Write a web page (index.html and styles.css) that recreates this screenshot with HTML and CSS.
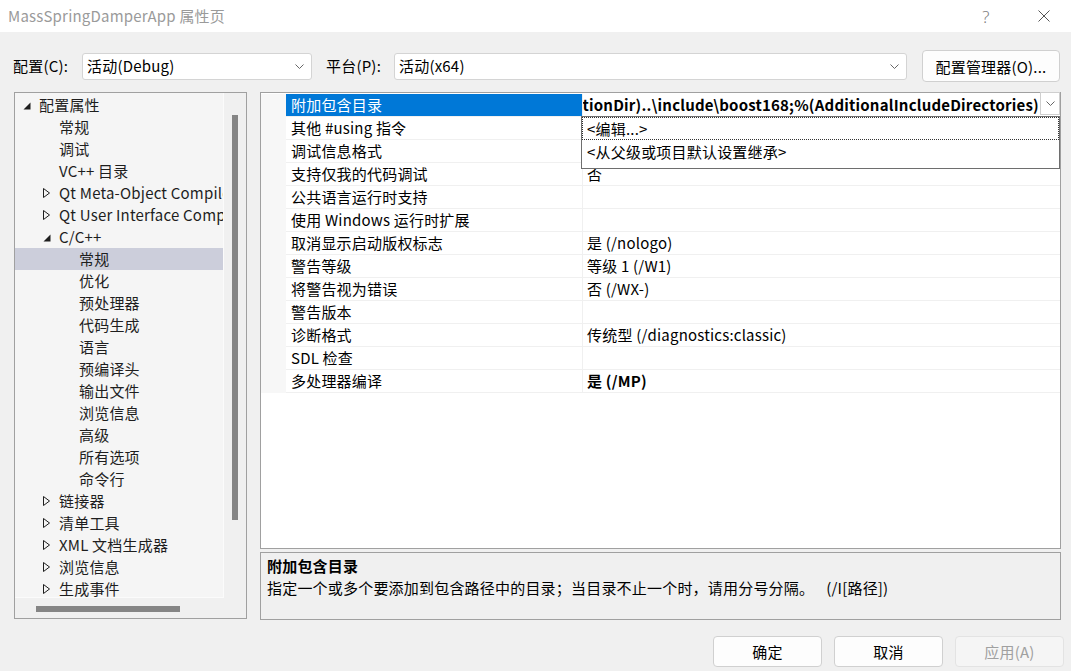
FILE: index.html
```html
<!DOCTYPE html>
<html lang="zh-CN">
<head>
<meta charset="utf-8">
<title>MassSpringDamperApp 属性页</title>
<link rel="stylesheet" href="styles.css">
</head>
<body>
<div class="window">
  <div class="titlebar">
    <div class="title">MassSpringDamperApp 属性页</div>
    <div class="tb-btn help">?</div>
    <div class="tb-btn close">
      <svg width="12" height="12" viewBox="0 0 12 12"><path d="M0.5 0.5 L11.5 11.5 M11.5 0.5 L0.5 11.5" stroke="#555" stroke-width="1" fill="none"/></svg>
    </div>
  </div>

  <div class="config-row">
    <span class="lbl lbl-config">配置(C):</span>
    <div class="combo combo-config">
      <span class="combo-text">活动(Debug)</span>
      <svg class="chev" width="9" height="5" viewBox="0 0 9 5"><path d="M0.5 0.5 L4.5 4.5 L8.5 0.5" stroke="#666" fill="none"/></svg>
    </div>
    <span class="lbl lbl-platform">平台(P):</span>
    <div class="combo combo-platform">
      <span class="combo-text">活动(x64)</span>
      <svg class="chev" width="9" height="5" viewBox="0 0 9 5"><path d="M0.5 0.5 L4.5 4.5 L8.5 0.5" stroke="#666" fill="none"/></svg>
    </div>
    <div class="btn btn-mgr">配置管理器(O)...</div>
  </div>

  <div class="main">
    <div class="tree">
      <div class="tree-content">
        <div class="trow l0"><span class="arrow"><svg class="tri-open" width="8" height="8" viewBox="0 0 8 8"><path d="M7.5 0.5 L7.5 7.5 L0.5 7.5 Z" fill="#1e1e1e"/></svg></span><span class="tlabel">配置属性</span></div>
        <div class="trow l1"><span class="arrow"></span><span class="tlabel">常规</span></div>
        <div class="trow l1"><span class="arrow"></span><span class="tlabel">调试</span></div>
        <div class="trow l1"><span class="arrow"></span><span class="tlabel">VC++ 目录</span></div>
        <div class="trow l1"><span class="arrow"><svg width="7" height="10" viewBox="0 0 7 10"><path d="M0.5 0.5 L6.5 5 L0.5 9.5 Z" fill="none" stroke="#1e1e1e"/></svg></span><span class="tlabel">Qt Meta-Object Compiler</span></div>
        <div class="trow l1"><span class="arrow"><svg width="7" height="10" viewBox="0 0 7 10"><path d="M0.5 0.5 L6.5 5 L0.5 9.5 Z" fill="none" stroke="#1e1e1e"/></svg></span><span class="tlabel">Qt User Interface Compiler</span></div>
        <div class="trow l1"><span class="arrow"><svg class="tri-open" width="8" height="8" viewBox="0 0 8 8"><path d="M7.5 0.5 L7.5 7.5 L0.5 7.5 Z" fill="#1e1e1e"/></svg></span><span class="tlabel">C/C++</span></div>
        <div class="trow l2 selected"><span class="arrow"></span><span class="tlabel">常规</span></div>
        <div class="trow l2"><span class="arrow"></span><span class="tlabel">优化</span></div>
        <div class="trow l2"><span class="arrow"></span><span class="tlabel">预处理器</span></div>
        <div class="trow l2"><span class="arrow"></span><span class="tlabel">代码生成</span></div>
        <div class="trow l2"><span class="arrow"></span><span class="tlabel">语言</span></div>
        <div class="trow l2"><span class="arrow"></span><span class="tlabel">预编译头</span></div>
        <div class="trow l2"><span class="arrow"></span><span class="tlabel">输出文件</span></div>
        <div class="trow l2"><span class="arrow"></span><span class="tlabel">浏览信息</span></div>
        <div class="trow l2"><span class="arrow"></span><span class="tlabel">高级</span></div>
        <div class="trow l2"><span class="arrow"></span><span class="tlabel">所有选项</span></div>
        <div class="trow l2"><span class="arrow"></span><span class="tlabel">命令行</span></div>
        <div class="trow l1"><span class="arrow"><svg width="7" height="10" viewBox="0 0 7 10"><path d="M0.5 0.5 L6.5 5 L0.5 9.5 Z" fill="none" stroke="#1e1e1e"/></svg></span><span class="tlabel">链接器</span></div>
        <div class="trow l1"><span class="arrow"><svg width="7" height="10" viewBox="0 0 7 10"><path d="M0.5 0.5 L6.5 5 L0.5 9.5 Z" fill="none" stroke="#1e1e1e"/></svg></span><span class="tlabel">清单工具</span></div>
        <div class="trow l1"><span class="arrow"><svg width="7" height="10" viewBox="0 0 7 10"><path d="M0.5 0.5 L6.5 5 L0.5 9.5 Z" fill="none" stroke="#1e1e1e"/></svg></span><span class="tlabel">XML 文档生成器</span></div>
        <div class="trow l1"><span class="arrow"><svg width="7" height="10" viewBox="0 0 7 10"><path d="M0.5 0.5 L6.5 5 L0.5 9.5 Z" fill="none" stroke="#1e1e1e"/></svg></span><span class="tlabel">浏览信息</span></div>
        <div class="trow l1"><span class="arrow"><svg width="7" height="10" viewBox="0 0 7 10"><path d="M0.5 0.5 L6.5 5 L0.5 9.5 Z" fill="none" stroke="#1e1e1e"/></svg></span><span class="tlabel">生成事件</span></div>
      </div>
      <div class="vscroll"><div class="vthumb"></div></div>
      <div class="hscroll"><div class="hthumb"></div></div>
      <div class="corner"></div>
    </div>

    <div class="right">
      <div class="grid">
        <div class="prow selected">
          <div class="gutter"></div>
          <div class="pname">附加包含目录</div>
          <div class="pval edit">
            <div class="edit-clip"><span class="edit-text">$(SolutionDir)..\include\boost168;%(AdditionalIncludeDirectories)</span></div>
            <div class="dd-btn"><svg width="9" height="5" viewBox="0 0 9 5"><path d="M0.5 0.5 L4.5 4.5 L8.5 0.5" stroke="#666" fill="none"/></svg></div>
          </div>
        </div>
        <div class="prow"><div class="gutter"></div><div class="pname">其他 #using 指令</div><div class="pval"></div></div>
        <div class="prow"><div class="gutter"></div><div class="pname">调试信息格式</div><div class="pval"></div></div>
        <div class="prow"><div class="gutter"></div><div class="pname">支持仅我的代码调试</div><div class="pval">否</div></div>
        <div class="prow"><div class="gutter"></div><div class="pname">公共语言运行时支持</div><div class="pval"></div></div>
        <div class="prow"><div class="gutter"></div><div class="pname">使用 Windows 运行时扩展</div><div class="pval"></div></div>
        <div class="prow"><div class="gutter"></div><div class="pname">取消显示启动版权标志</div><div class="pval">是 (/nologo)</div></div>
        <div class="prow"><div class="gutter"></div><div class="pname">警告等级</div><div class="pval">等级 1 (/W1)</div></div>
        <div class="prow"><div class="gutter"></div><div class="pname">将警告视为错误</div><div class="pval">否 (/WX-)</div></div>
        <div class="prow"><div class="gutter"></div><div class="pname">警告版本</div><div class="pval"></div></div>
        <div class="prow"><div class="gutter"></div><div class="pname">诊断格式</div><div class="pval">传统型 (/diagnostics:classic)</div></div>
        <div class="prow"><div class="gutter"></div><div class="pname">SDL 检查</div><div class="pval"></div></div>
        <div class="prow"><div class="gutter"></div><div class="pname">多处理器编译</div><div class="pval bold">是 (/MP)</div></div>

        <div class="popup">
          <div class="popup-item focus">&lt;编辑...&gt;</div>
          <div class="popup-item">&lt;从父级或项目默认设置继承&gt;</div>
        </div>
      </div>
      <div class="desc">
        <div class="desc-title">附加包含目录</div>
        <div class="desc-text">指定一个或多个要添加到包含路径中的目录；当目录不止一个时，请用分号分隔。<span class="desc-switch">(/I[路径])</span></div>
      </div>
    </div>
  </div>

  <div class="footer">
    <div class="btn fbtn">确定</div>
    <div class="btn fbtn">取消</div>
    <div class="btn fbtn disabled">应用(A)</div>
  </div>
</div>
</body>
</html>
```

FILE: styles.css
```css
* { box-sizing: border-box; }
html, body { margin: 0; padding: 0; }
body {
  width: 1071px;
  height: 671px;
  overflow: hidden;
  background: #f0f0f0;
  font-family: "Noto Sans CJK SC", "Noto Sans", sans-serif;
  font-size: 15px;
  letter-spacing: 0.2px;
  color: #000;
}
.window { width: 1071px; height: 671px; display: flex; flex-direction: column; }

/* title bar */
.titlebar {
  height: 32px;
  background: #fff;
  display: flex;
  align-items: center;
  padding-left: 8px;
  padding-right: 4px;
}
.title { flex: 1; color: #9a9a9a; font-size: 15px; line-height: 20px; }
.tb-btn { width: 46px; height: 32px; display: flex; align-items: center; justify-content: center; }
.help { color: #808080; font-size: 17px; margin-right: 12px; font-family: "Noto Sans", sans-serif; font-weight: 300; }

/* config row */
.config-row {
  display: flex;
  align-items: center;
  height: 32px;
  margin-top: 18px;
  padding-left: 13px;
}
.lbl { line-height: 20px; white-space: nowrap; }
.lbl-config { width: 69px; }
.lbl-platform { width: 68px; margin-left: 14px; }
.combo {
  height: 27px;
  background: #fff;
  border: 1px solid #d4d4d4;
  border-radius: 3px;
  display: flex;
  align-items: center;
  padding-left: 4px;
  padding-right: 7px;
}
.combo-config { width: 230px; }
.combo-platform { width: 513px; }
.combo-text { flex: 1; line-height: 20px; }
.chev { flex-shrink: 0; }
.btn {
  display: flex;
  align-items: center;
  justify-content: center;
  background: #fdfdfd;
  border: 1px solid #d0d0d0;
  border-radius: 4px;
  white-space: nowrap;
}
.btn-mgr { width: 138px; height: 32px; margin-left: 15px; }

/* main area */
.main {
  display: flex;
  margin-top: 10px;
  padding-left: 14px;
  height: 528px;
  gap: 13px;
}
.tree {
  width: 233px;
  height: 527px;
  border: 1px solid #a0a0a0;
  display: grid;
  grid-template-columns: 1fr 22px;
  grid-template-rows: 1fr 20px;
  background: #f0f0f0;
}
.tree-content {
  background: #f5f5f5;
  overflow: hidden;
  padding-top: 1px;
  border-right: 1px solid #fbfbfb;
  border-bottom: 1px solid #fbfbfb;
}
.trow {
  height: 22px;
  display: flex;
  align-items: center;
  white-space: nowrap;
  color: #1e1e1e;
}
.trow.l0 { padding-left: 8px; }
.trow.l1 { padding-left: 28px; }
.trow.l2 { padding-left: 48px; }
.trow.selected { background: #cccedb; }
.arrow { width: 16px; flex-shrink: 0; display: flex; align-items: center; height: 22px; }
.arrow svg { display: block; }
.tri-open { margin-top: 2px; }
.tlabel { line-height: 20px; }
.vscroll { padding: 22px 0 0 8px; }
.vthumb { width: 6px; height: 405px; background: #858585; }
.hscroll { padding: 8px 0 0 21px; }
.hthumb { width: 144px; height: 6px; background: #858585; }

/* right side */
.right { width: 801px; display: flex; flex-direction: column; gap: 3px; }
.grid {
  position: relative;
  height: 457px;
  border: 1px solid #a0a0a0;
  background: #fff;
  padding-top: 1px;
}
.prow {
  display: flex;
  height: 23px;
}
.gutter { width: 25px; flex-shrink: 0; background: #f7f7f7; }
.pname {
  width: 296px;
  flex-shrink: 0;
  padding-left: 5px;
  line-height: 22px;
  border-bottom: 1px solid #f0f0f0;
  white-space: nowrap;
  overflow: hidden;
}
.pval {
  flex: 1;
  min-width: 0;
  border-left: 1px solid #f0f0f0;
  border-bottom: 1px solid #f0f0f0;
  padding-left: 4px;
  line-height: 22px;
  white-space: nowrap;
}
.pval.bold { font-weight: bold; }
.prow.selected .pname { background: #0078d7; color: #fff; }
.pval.edit {
  display: flex;
  padding-left: 0;
  padding-right: 0;
}
.edit-clip {
  flex: 1;
  min-width: 0;
  overflow: hidden;
  display: flex;
  justify-content: flex-end;
  font-weight: bold;
  padding-right: 1px;
}
.edit-text { flex-shrink: 0; }
.dd-btn {
  width: 20px;
  height: 23px;
  margin-top: -2px;
  border: 1px solid #cfcfcf;
  background: #fff;
  display: flex;
  align-items: center;
  justify-content: center;
  flex-shrink: 0;
}
.popup {
  position: absolute;
  left: 320px;
  top: 23px;
  width: 479px;
  height: 53px;
  background: #fff;
  border: 1px solid #6e6e6e;
}
.popup-item {
  height: 23px;
  line-height: 21px;
  padding-left: 4px;
  white-space: nowrap;
  border: 1px solid transparent;
}
.popup-item.focus { border: 1px dotted #333; }

.desc {
  height: 68px;
  border: 1px solid #a0a0a0;
  background: #f0f0f0;
  padding: 2px 6px 0;
}
.desc-title { font-weight: bold; line-height: 21px; }
.desc-text { line-height: 23px; white-space: nowrap; }
.desc-switch { margin-left: 12px; }

/* footer */
.footer {
  display: flex;
  justify-content: flex-end;
  gap: 12px;
  padding-top: 16px;
  padding-right: 7px;
}
.fbtn { width: 109px; height: 31px; }
.fbtn.disabled { color: #a0a0a0; background: #f5f5f5; border-color: #e3e3e3; }
```
